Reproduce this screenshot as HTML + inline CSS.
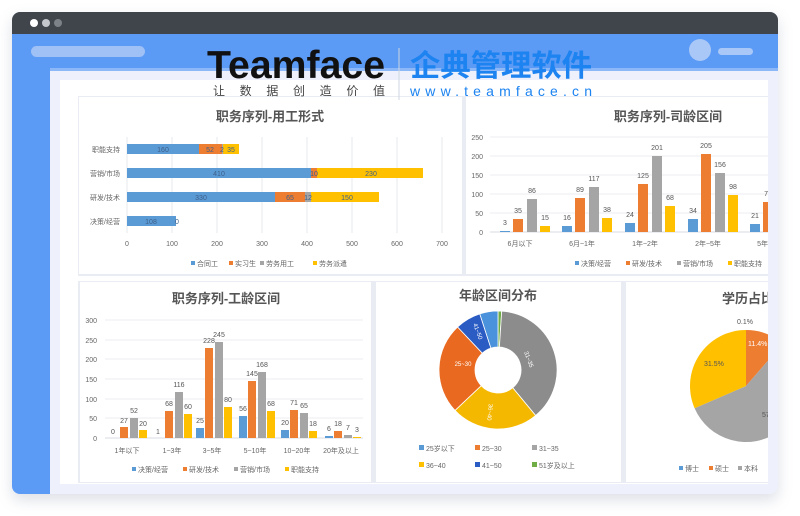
<!DOCTYPE html>
<html><head><meta charset="utf-8">
<style>
*{margin:0;padding:0;box-sizing:border-box}
body{width:800px;height:516px;background:#fff;position:relative;overflow:hidden;font-family:"Liberation Sans","Noto Sans CJK SC",sans-serif}
.frame{position:absolute;left:12px;top:12px;width:766px;height:482px;border-radius:8px;overflow:hidden;background:#eef1fb;box-shadow:0 6px 14px rgba(120,130,160,.25)}
.bar{position:absolute;left:0;top:0;width:766px;height:22px;background:#40454c}
.dot{position:absolute;top:7px;width:8px;height:8px;border-radius:50%}
.hdr{position:absolute;left:0;top:22px;width:766px;height:34px;background:#5b9af5}
.line{position:absolute;left:0;top:56px;width:766px;height:3px;background:#8db8f7}
.side{position:absolute;left:0;top:56px;width:38px;height:426px;background:#5b9af5}
.card{position:absolute;left:48px;top:68px;width:708px;height:404px;background:#fff}
svg{position:absolute;left:0;top:0}
</style></head><body>
<div class="frame">
 <div class="bar"></div>
 <div class="dot" style="left:18px;background:#fff"></div>
 <div class="dot" style="left:30px;background:#c4c7cc"></div>
 <div class="dot" style="left:42px;background:#7d8289"></div>
 <div class="hdr"></div>
 <div class="line"></div>
 <div class="side"></div>
 <div style="position:absolute;left:19px;top:34px;width:114px;height:11px;border-radius:6px;background:#9fc1f5"></div>
 <div style="position:absolute;left:677px;top:27px;width:22px;height:22px;border-radius:50%;background:#a9c8f7"></div>
 <div style="position:absolute;left:706px;top:36px;width:35px;height:7px;border-radius:4px;background:#a9c8f7"></div>
 <div class="card"></div>
</div>
<svg width="800" height="516" viewBox="0 0 800 516" font-family="Liberation Sans, Noto Sans CJK SC, sans-serif">
<defs><clipPath id="c"><rect x="60" y="80" width="708" height="404"/></clipPath></defs>
<g clip-path="url(#c)">
<rect x="78" y="96" width="692" height="180" fill="#e9edf3"/>
<rect x="79" y="97" width="383" height="177" fill="#fff"/>
<rect x="466" y="97" width="310" height="177" fill="#fff"/>
<rect x="78" y="281" width="700" height="202" fill="#e9edf3"/>
<rect x="80" y="282" width="291" height="200" fill="#fff"/>
<rect x="376" y="282" width="245" height="200" fill="#fff"/>
<rect x="626" y="282" width="150" height="200" fill="#fff"/>

<!-- chart1 -->
<text x="270" y="121" font-size="13" font-weight="bold" fill="#555" text-anchor="middle">职务序列-用工形式</text>
<g stroke="#e6e9ee" stroke-width="1">
<line x1="127" y1="137" x2="127" y2="233"/><line x1="172" y1="137" x2="172" y2="233"/><line x1="217" y1="137" x2="217" y2="233"/><line x1="262" y1="137" x2="262" y2="233"/><line x1="307" y1="137" x2="307" y2="233"/><line x1="352" y1="137" x2="352" y2="233"/><line x1="397" y1="137" x2="397" y2="233"/><line x1="442" y1="137" x2="442" y2="233"/>
</g>
<g font-size="7" fill="#666" text-anchor="end">
<text x="120" y="152">职能支持</text><text x="120" y="176">营销/市场</text><text x="120" y="200">研发/技术</text><text x="120" y="224">决策/经营</text>
</g>
<rect x="127" y="144" width="72" height="10" fill="#5b9bd5"/><rect x="199" y="144" width="23" height="10" fill="#ed7d31"/><rect x="222" y="144" width="1" height="10" fill="#a5a5a5"/><rect x="223" y="144" width="16" height="10" fill="#ffc000"/>
<rect x="127" y="168" width="184" height="10" fill="#5b9bd5"/><rect x="311" y="168" width="6" height="10" fill="#ed7d31"/><rect x="317" y="168" width="106" height="10" fill="#ffc000"/>
<rect x="127" y="192" width="148" height="10" fill="#5b9bd5"/><rect x="275" y="192" width="30" height="10" fill="#ed7d31"/><rect x="305" y="192" width="6" height="10" fill="#a5a5a5"/><rect x="311" y="192" width="68" height="10" fill="#ffc000"/>
<rect x="127" y="216" width="49" height="10" fill="#5b9bd5"/>
<g font-size="7" fill="#3d5f8a" text-anchor="middle">
<text x="163" y="152">160</text><text x="210" y="152">52</text><text x="222" y="152">2</text><text x="231" y="152">35</text>
<text x="219" y="176">410</text><text x="314" y="176">10</text><text x="371" y="176">230</text>
<text x="201" y="200">330</text><text x="290" y="200">65</text><text x="308" y="200">12</text><text x="347" y="200">150</text>
<text x="151" y="224">108</text><text x="177" y="224">0</text>
</g>
<g font-size="7" fill="#666" text-anchor="middle">
<text x="127" y="246">0</text><text x="172" y="246">100</text><text x="217" y="246">200</text><text x="262" y="246">300</text><text x="307" y="246">400</text><text x="352" y="246">500</text><text x="397" y="246">600</text><text x="442" y="246">700</text>
</g>
<g font-size="7" fill="#666">
<rect x="191" y="261" width="4" height="4" fill="#5b9bd5"/><text x="197" y="266">合同工</text>
<rect x="229" y="261" width="4" height="4" fill="#ed7d31"/><text x="235" y="266">实习生</text>
<rect x="260" y="261" width="4" height="4" fill="#a5a5a5"/><text x="266" y="266">劳务用工</text>
<rect x="313" y="261" width="4" height="4" fill="#ffc000"/><text x="319" y="266">劳务派遣</text>
</g>

<!-- chart2 -->
<text x="668" y="121" font-size="13" font-weight="bold" fill="#555" text-anchor="middle">职务序列-司龄区间</text>
<g stroke="#eceef2"><line x1="490" y1="137" x2="770" y2="137"/><line x1="490" y1="156" x2="770" y2="156"/><line x1="490" y1="175" x2="770" y2="175"/><line x1="490" y1="194" x2="770" y2="194"/><line x1="490" y1="213" x2="770" y2="213"/><line x1="490" y1="232" x2="770" y2="232" stroke="#d8dbe0"/></g>
<g font-size="7" fill="#666" text-anchor="end"><text x="483" y="140">250</text><text x="483" y="159">200</text><text x="483" y="178">150</text><text x="483" y="197">100</text><text x="483" y="216">50</text><text x="483" y="235">0</text></g>
<g fill="#5b9bd5"><rect x="500" y="231" width="10" height="1"/><rect x="562" y="226" width="10" height="6"/><rect x="625" y="223" width="10" height="9"/><rect x="688" y="219" width="10" height="13"/><rect x="750" y="224" width="10" height="8"/></g>
<g fill="#ed7d31"><rect x="513" y="219" width="10" height="13"/><rect x="575" y="198" width="10" height="34"/><rect x="638" y="184" width="10" height="48"/><rect x="701" y="154" width="10" height="78"/><rect x="763" y="202" width="10" height="30"/></g>
<g fill="#a5a5a5"><rect x="527" y="199" width="10" height="33"/><rect x="589" y="187" width="10" height="45"/><rect x="652" y="156" width="10" height="76"/><rect x="715" y="173" width="10" height="59"/></g>
<g fill="#ffc000"><rect x="540" y="226" width="10" height="6"/><rect x="602" y="218" width="10" height="14"/><rect x="665" y="206" width="10" height="26"/><rect x="728" y="195" width="10" height="37"/></g>
<g font-size="7" fill="#555" text-anchor="middle">
<text x="505" y="225">3</text><text x="518" y="213">35</text><text x="532" y="193">86</text><text x="545" y="220">15</text>
<text x="567" y="220">16</text><text x="580" y="192">89</text><text x="594" y="181">117</text><text x="607" y="212">38</text>
<text x="630" y="217">24</text><text x="643" y="178">125</text><text x="657" y="150">201</text><text x="670" y="200">68</text>
<text x="693" y="213">34</text><text x="706" y="148">205</text><text x="720" y="167">156</text><text x="733" y="189">98</text>
<text x="755" y="218">21</text><text x="768" y="196">78</text>
</g>
<g font-size="7" fill="#666" text-anchor="middle"><text x="520" y="246">6月以下</text><text x="582" y="246">6月~1年</text><text x="645" y="246">1年~2年</text><text x="708" y="246">2年~5年</text><text x="772" y="246">5年~10年</text></g>
<g font-size="7" fill="#666">
<rect x="575" y="261" width="4" height="4" fill="#5b9bd5"/><text x="581" y="266">决策/经营</text>
<rect x="626" y="261" width="4" height="4" fill="#ed7d31"/><text x="632" y="266">研发/技术</text>
<rect x="677" y="261" width="4" height="4" fill="#a5a5a5"/><text x="683" y="266">营销/市场</text>
<rect x="728" y="261" width="4" height="4" fill="#ffc000"/><text x="734" y="266">职能支持</text>
</g>

<!-- chart3 -->
<text x="226" y="303" font-size="13" font-weight="bold" fill="#555" text-anchor="middle">职务序列-工龄区间</text>
<g stroke="#eceef2"><line x1="105" y1="320" x2="363" y2="320"/><line x1="105" y1="340" x2="363" y2="340"/><line x1="105" y1="359" x2="363" y2="359"/><line x1="105" y1="379" x2="363" y2="379"/><line x1="105" y1="399" x2="363" y2="399"/><line x1="105" y1="418" x2="363" y2="418"/><line x1="105" y1="438" x2="363" y2="438" stroke="#d8dbe0"/></g>
<g font-size="7" fill="#666" text-anchor="end"><text x="97" y="323">300</text><text x="97" y="343">250</text><text x="97" y="362">200</text><text x="97" y="382">150</text><text x="97" y="402">100</text><text x="97" y="421">50</text><text x="97" y="441">0</text></g>
<g fill="#5b9bd5"><rect x="196" y="428" width="8" height="10"/><rect x="239" y="416" width="8" height="22"/><rect x="281" y="430" width="8" height="8"/><rect x="325" y="436" width="8" height="2"/></g>
<g fill="#ed7d31"><rect x="120" y="427" width="8" height="11"/><rect x="165" y="411" width="8" height="27"/><rect x="205" y="348" width="8" height="90"/><rect x="248" y="381" width="8" height="57"/><rect x="290" y="410" width="8" height="28"/><rect x="334" y="431" width="8" height="7"/></g>
<g fill="#a5a5a5"><rect x="130" y="418" width="8" height="20"/><rect x="175" y="392" width="8" height="46"/><rect x="215" y="342" width="8" height="96"/><rect x="258" y="372" width="8" height="66"/><rect x="300" y="413" width="8" height="25"/><rect x="344" y="435" width="8" height="3"/></g>
<g fill="#ffc000"><rect x="139" y="430" width="8" height="8"/><rect x="184" y="414" width="8" height="24"/><rect x="224" y="407" width="8" height="31"/><rect x="267" y="411" width="8" height="27"/><rect x="309" y="431" width="8" height="7"/><rect x="353" y="437" width="8" height="1"/></g>
<g font-size="7" fill="#555" text-anchor="middle">
<text x="113" y="434">0</text><text x="124" y="423">27</text><text x="134" y="413">52</text><text x="143" y="426">20</text>
<text x="158" y="434">1</text><text x="169" y="406">68</text><text x="179" y="387">116</text><text x="188" y="409">60</text>
<text x="200" y="423">25</text><text x="209" y="343">228</text><text x="219" y="337">245</text><text x="228" y="402">80</text>
<text x="243" y="411">56</text><text x="252" y="376">145</text><text x="262" y="367">168</text><text x="271" y="406">68</text>
<text x="285" y="425">20</text><text x="294" y="405">71</text><text x="304" y="408">65</text><text x="313" y="426">18</text>
<text x="329" y="431">6</text><text x="338" y="426">18</text><text x="348" y="430">7</text><text x="357" y="432">3</text>
</g>
<g font-size="7" fill="#666" text-anchor="middle"><text x="127" y="453">1年以下</text><text x="172" y="453">1~3年</text><text x="212" y="453">3~5年</text><text x="255" y="453">5~10年</text><text x="297" y="453">10~20年</text><text x="341" y="453">20年及以上</text></g>
<g font-size="7" fill="#666">
<rect x="132" y="467" width="4" height="4" fill="#5b9bd5"/><text x="138" y="472">决策/经营</text>
<rect x="183" y="467" width="4" height="4" fill="#ed7d31"/><text x="189" y="472">研发/技术</text>
<rect x="234" y="467" width="4" height="4" fill="#a5a5a5"/><text x="240" y="472">营销/市场</text>
<rect x="285" y="467" width="4" height="4" fill="#ffc000"/><text x="291" y="472">职能支持</text>
</g>

<!-- chart4 donut -->
<text x="498" y="300" font-size="13" font-weight="bold" fill="#555" text-anchor="middle">年龄区间分布</text>
<g stroke="#fff" stroke-width="0.8">
<path d="M498 311 A59 59 0 0 1 501.7 311.1 L499.4 347 A23 23 0 0 0 498 347Z" fill="#70ad47"/>
<path d="M501.7 311.1 A59 59 0 0 1 535.6 415.5 L512.7 387.7 A23 23 0 0 0 499.4 347Z" fill="#8c8c8c"/>
<path d="M535.6 415.5 A59 59 0 0 1 455 410.4 L481.2 385.7 A23 23 0 0 0 512.7 387.7Z" fill="#f5b800"/>
<path d="M455 410.4 A59 59 0 0 1 457.6 327 L482.3 353.2 A23 23 0 0 0 481.2 385.7Z" fill="#e8691f"/>
<path d="M457.6 327 A59 59 0 0 1 479.8 313.9 L490.9 348.1 A23 23 0 0 0 482.3 353.2Z" fill="#2a5cc4"/>
<path d="M479.8 313.9 A59 59 0 0 1 498 311 L498 347 A23 23 0 0 0 490.9 348.1Z" fill="#4a92dc"/>
</g>
<g font-size="6" fill="#fff" text-anchor="middle"><text x="527" y="360" transform="rotate(70 527 360)">31~35</text><text x="488" y="412" transform="rotate(95 488 412)">36~40</text><text x="463" y="366">25~30</text><text x="476" y="332" transform="rotate(70 476 332)">41~50</text></g>
<g font-size="7" fill="#666">
<rect x="419" y="445" width="5" height="5" fill="#5b9bd5"/><text x="426" y="451">25岁以下</text>
<rect x="475" y="445" width="5" height="5" fill="#ed7d31"/><text x="482" y="451">25~30</text>
<rect x="532" y="445" width="5" height="5" fill="#a5a5a5"/><text x="539" y="451">31~35</text>
<rect x="419" y="462" width="5" height="5" fill="#ffc000"/><text x="426" y="468">36~40</text>
<rect x="475" y="462" width="5" height="5" fill="#2a5cc4"/><text x="482" y="468">41~50</text>
<rect x="532" y="462" width="5" height="5" fill="#70ad47"/><text x="539" y="468">51岁及以上</text>
</g>

<!-- chart5 pie -->
<text x="748" y="303" font-size="13" font-weight="bold" fill="#555" text-anchor="middle">学历占比</text>
<path d="M746 386 L746 330 A56 56 0 0 1 782.7 343.7Z" fill="#ed7d31"/>
<path d="M746 386 L782.7 343.7 A56 56 0 1 1 694.6 408.2Z" fill="#a5a5a5"/>
<path d="M746 386 L694.6 408.2 A56 56 0 0 1 746 330Z" fill="#ffc000"/>
<g font-size="7" fill="#555"><text x="737" y="324">0.1%</text><text x="748" y="346" fill="#fff">11.4%</text><text x="704" y="366">31.5%</text><text x="762" y="417">57</text></g>
<g font-size="7" fill="#666">
<rect x="679" y="466" width="4" height="4" fill="#5b9bd5"/><text x="685" y="471">博士</text>
<rect x="709" y="466" width="4" height="4" fill="#ed7d31"/><text x="715" y="471">硕士</text>
<rect x="738" y="466" width="4" height="4" fill="#a5a5a5"/><text x="744" y="471">本科</text>
</g>
</g>

<!-- logo overlay -->
<text x="207" y="78" font-size="39" font-weight="bold" fill="#111" textLength="178" lengthAdjust="spacingAndGlyphs">Teamface</text>
<line x1="399" y1="48" x2="399" y2="100" stroke="#cfd6e0" stroke-width="1"/>
<text x="410" y="76" font-size="30" font-weight="bold" fill="#1c83f0" textLength="182" lengthAdjust="spacingAndGlyphs">企典管理软件</text>
<text x="213" y="95" font-size="12" fill="#444" textLength="172" lengthAdjust="spacing">让数据创造价值</text>
<text x="410" y="96" font-size="14" fill="#1c83f0" textLength="182" lengthAdjust="spacing">www.teamface.cn</text>
</svg>
</body></html>
